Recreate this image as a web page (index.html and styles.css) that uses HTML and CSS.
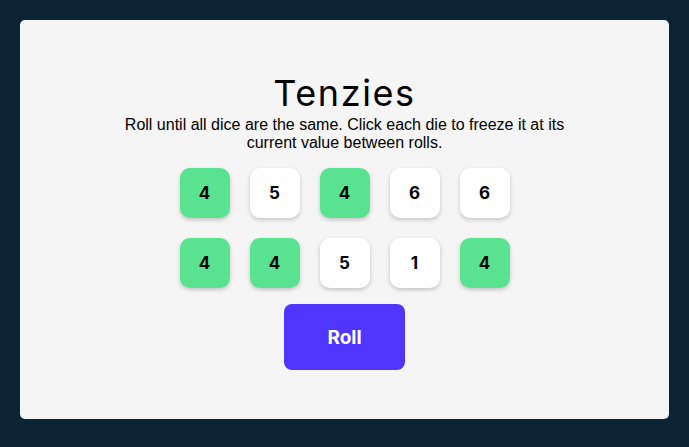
FILE: index.html
```html
<!DOCTYPE html>
<html lang="en">
<head>
<meta charset="utf-8">
<title>Tenzies</title>
<link rel="stylesheet" href="styles.css">
</head>
<body>
<main class="board">
  <h1 class="title">Tenzies</h1>
  <p class="instructions">Roll until all dice are the same. Click each die to freeze it at its current value between rolls.</p>
  <div class="dice">
    <button class="die held">4</button>
    <button class="die">5</button>
    <button class="die held">4</button>
    <button class="die">6</button>
    <button class="die">6</button>
    <button class="die held">4</button>
    <button class="die held">4</button>
    <button class="die">5</button>
    <button class="die">1</button>
    <button class="die held">4</button>
  </div>
  <button class="roll">Roll</button>
</main>
</body>
</html>
```
FILE: styles.css
```css
html, body {
  margin: 0;
  padding: 0;
}
body {
  background: #0B2434;
  padding: 20px;
  font-family: "Inter", "Liberation Sans", sans-serif;
  box-sizing: border-box;
  height: 447px;
}
.board {
  background: #F5F5F5;
  height: 399px;
  border-radius: 5px;
  display: flex;
  flex-direction: column;
  align-items: center;
  padding-top: 53px;
  box-sizing: border-box;
}
.title {
  margin: 0 0 3px;
  font-family: "Inter", sans-serif;
  font-weight: 400;
  font-size: 36px;
  line-height: 40px;
  letter-spacing: 1.6px;
  color: #000;
}
.instructions {
  margin: 0 0 16px;
  font-family: "Liberation Sans", Arial, sans-serif;
  font-size: 16px;
  text-align: center;
  max-width: 452px;
  color: #000;
}
.dice {
  display: grid;
  grid-template-columns: repeat(5, 50px);
  grid-auto-rows: 50px;
  gap: 20px;
}
.die {
  border: none;
  border-radius: 10px;
  background: #FFFFFF;
  box-shadow: 0 2px 4px rgba(0, 0, 0, 0.2);
  font-family: "Inter", sans-serif;
  font-weight: 700;
  font-size: 17px;
  color: #000;
  padding: 0;
}
.die.held {
  background: #59E391;
}
.roll {
  margin-top: 16px;
  width: 121px;
  height: 66px;
  border: none;
  border-radius: 8px;
  background: #5035FF;
  color: #FFFFFF;
  font-family: "Inter", sans-serif;
  font-weight: 700;
  font-size: 19px;
  padding: 0;
}
```
